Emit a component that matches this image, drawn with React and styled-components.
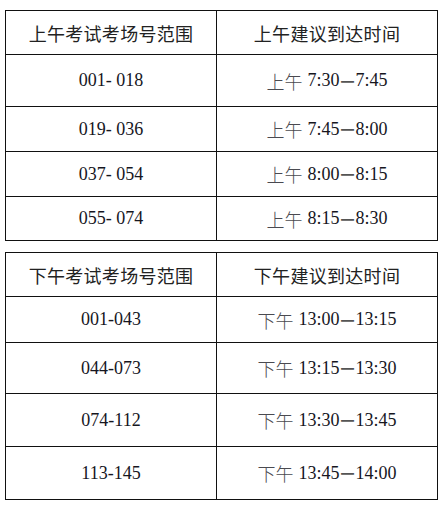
import React from "react";
import styled, { createGlobalStyle } from "styled-components";

const GlobalStyle = createGlobalStyle`
  body {
    margin: 0;
    background: #ffffff;
  }
`;

const Page = styled.div`
  display: flex;
  flex-direction: column;
  gap: 11px;
  padding: 10px 0 0 5px;
`;

const Table = styled.div`
  width: 433px;
  box-sizing: border-box;
  border-left: 1px solid #111;
  border-top: 1px solid #111;
  display: flex;
  flex-direction: column;
`;

const Row = styled.div`
  display: grid;
  grid-template-columns: 211px 221px;
  height: ${(p) => p.$h}px;
`;

const Cell = styled.div`
  box-sizing: border-box;
  border-right: 1px solid #111;
  border-bottom: 1px solid #111;
  display: flex;
  align-items: center;
  justify-content: center;
  font-size: 18px;
  white-space: pre;
`;

const HeadCell = styled(Cell)`
  font-family: "Noto Sans CJK SC", "Noto Sans", sans-serif;
  color: #222;
  letter-spacing: 0.3px;
`;

const NumCell = styled(Cell)`
  font-family: "Liberation Serif", "Noto Sans CJK SC", serif;
  color: #16161e;
`;

const Period = styled.span`
  font-family: "Noto Sans CJK SC", sans-serif;
  font-weight: 300;
  color: #4a4a50;
  margin-right: 5px;
`;

const Dash = styled.span`
  font-family: "Noto Sans CJK SC", sans-serif;
  font-size: 14px;
  font-weight: 700;
  color: #555;
  margin: 0 1px;
`;

const Time = ({ period, from, to }) => (
  <>
    <Period>{period}</Period>
    {from}
    <Dash>一</Dash>
    {to}
  </>
);

const morning = [
  { h: 52, range: "001- 018", from: "7:30", to: "7:45" },
  { h: 45, range: "019- 036", from: "7:45", to: "8:00" },
  { h: 45, range: "037- 054", from: "8:00", to: "8:15" },
  { h: 44, range: "055- 074", from: "8:15", to: "8:30" },
];

const afternoon = [
  { h: 46, range: "001-043", from: "13:00", to: "13:15" },
  { h: 51, range: "044-073", from: "13:15", to: "13:30" },
  { h: 53, range: "074-112", from: "13:30", to: "13:45" },
  { h: 53, range: "113-145", from: "13:45", to: "14:00" },
];

const Schedule = ({ period, rows }) => (
  <Table>
    <Row $h={44}>
      <HeadCell>{period}考试考场号范围</HeadCell>
      <HeadCell>{period}建议到达时间</HeadCell>
    </Row>
    {rows.map((r) => (
      <Row key={r.range} $h={r.h}>
        <NumCell>{r.range}</NumCell>
        <NumCell>
          <Time period={period} from={r.from} to={r.to} />
        </NumCell>
      </Row>
    ))}
  </Table>
);

const App = () => (
  <>
    <GlobalStyle />
    <Page>
      <Schedule period="上午" rows={morning} />
      <Schedule period="下午" rows={afternoon} />
    </Page>
  </>
);

export default App;
